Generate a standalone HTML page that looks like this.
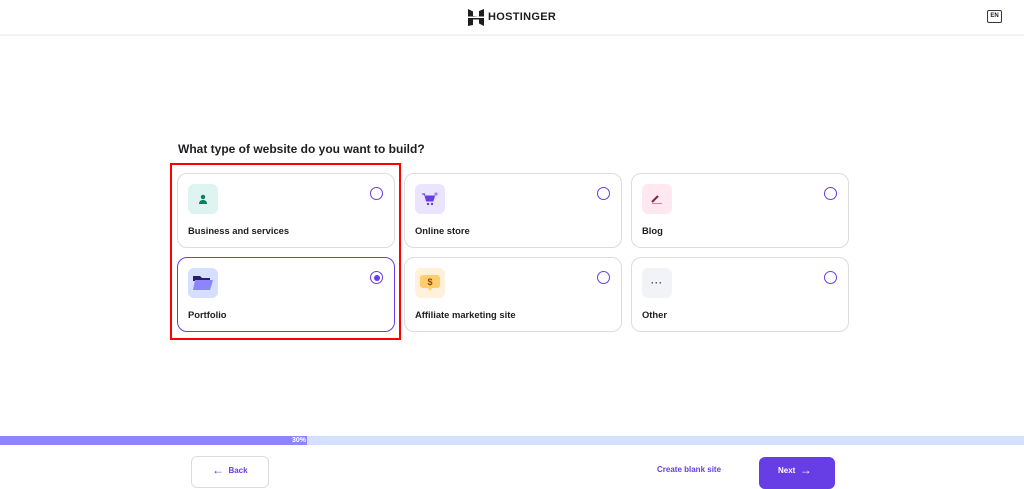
<!DOCTYPE html>
<html><head><style>
*{box-sizing:border-box;margin:0;padding:0}
body{width:1024px;height:484px;background:#fff;font-family:"Liberation Sans",sans-serif;position:relative;overflow:hidden;color:#1d1e20}
.hdr{position:absolute;left:0;top:0;width:1024px;height:36px;border-bottom:2px solid #f2f3f6}
.card{position:absolute;width:218px;height:75px;border:1px solid #dadce0;border-radius:10px;background:#fff}
.card.sel{border:1.5px solid #673de6}
.ic{position:absolute;left:10px;top:10px;width:30px;height:30px;border-radius:6px;display:flex;align-items:center;justify-content:center}
.rad{position:absolute;right:11px;top:13px;width:13px;height:13px;border:1.5px solid #673de6;border-radius:50%}
.lbl{position:absolute;left:10px;top:51px;font-size:9.4px;font-weight:bold;color:#1d1e20}
</style></head><body>
<div class="hdr">
 <svg style="position:absolute;left:468px;top:9px" width="16" height="17" viewBox="0 0 16 17"><path d="M0 0l5 2.5v4.5l6 .5V2l5-2v7.5H0z M0 9h16v8l-5-2.5v-4H5v5.5L0 17z" fill="#1d1e20"/></svg>
 <div style="position:absolute;left:488px;top:11px;font-size:11px;font-weight:bold;letter-spacing:.3px;color:#1d1e20">HOSTINGER</div>
 <div style="position:absolute;left:987px;top:10px;width:15px;height:13px;border:1.5px solid #36344d;border-radius:2px;font-size:6px;font-weight:bold;text-align:center;line-height:10px">EN</div>
</div>
<div style="position:absolute;left:178px;top:142px;font-size:12px;font-weight:bold;color:#1d1e20">What type of website do you want to build?</div>

<div class="card" style="left:177px;top:173px"><div class="ic" style="background:#def4f0"><svg width="10" height="10" viewBox="0 0 10 10"><circle cx="5" cy="3" r="2.2" fill="#008361"/><path d="M1 10c0-3 2-4 4-4s4 1 4 4z" fill="#008361"/></svg></div><div class="rad"></div><div class="lbl">Business and services</div></div>
<div class="card" style="left:404px;top:173px"><div class="ic" style="background:#ebe4ff"><svg width="16" height="14" viewBox="0 0 16 14"><path d="M0 2h2.5l2 7h6.5l1.5-5H4" fill="#673de6" stroke="#673de6" stroke-width="1"/><circle cx="6" cy="12" r="1.2" fill="#673de6"/><circle cx="10" cy="12" r="1.2" fill="#673de6"/><circle cx="14" cy="2" r="1.6" fill="#8c85ff"/></svg></div><div class="rad"></div><div class="lbl">Online store</div></div>
<div class="card" style="left:631px;top:173px"><div class="ic" style="background:#ffe8ef"><svg width="12" height="10" viewBox="0 0 12 10"><path d="M1 8l6-6" stroke="#8a1d4a" stroke-width="2"/><path d="M1 9.5h10" stroke="#d4658e" stroke-width=".8"/></svg></div><div class="rad"></div><div class="lbl">Blog</div></div>

<div class="card sel" style="left:177px;top:257px"><div class="ic" style="background:#d5dfff"><svg width="20" height="14" viewBox="0 0 20 14"><path d="M0 0h7l2 2h8v3H0z" fill="#2f1c6a"/><path d="M2 4h18l-3 10H0z" fill="#8c85ff"/></svg></div><div class="rad" style="display:flex;align-items:center;justify-content:center"><div style="width:6px;height:6px;border-radius:50%;background:#673de6"></div></div><div class="lbl">Portfolio</div></div>
<div class="card" style="left:404px;top:257px"><div class="ic" style="background:#fff1dc"><svg width="22" height="18" viewBox="0 0 22 18"><rect x="1" y="1" width="20" height="13" rx="3" fill="#ffcd6b"/><path d="M9 14l2 3 2-3z" fill="#ffcd6b"/><text x="11" y="11" font-size="9" font-weight="bold" text-anchor="middle" fill="#8a4b00" font-family="Liberation Sans">$</text></svg></div><div class="rad"></div><div class="lbl">Affiliate marketing site</div></div>
<div class="card" style="left:631px;top:257px"><div class="ic" style="background:#f2f3f6;font-size:9px;font-weight:bold;color:#36344d;letter-spacing:1px">···</div><div class="rad"></div><div class="lbl">Other</div></div>

<div style="position:absolute;left:170px;top:163px;width:231px;height:177px;border:2px solid #f00"></div>

<div style="position:absolute;left:0;top:436px;width:1024px;height:9px;background:#d5dfff"></div>
<div style="position:absolute;left:0;top:436px;width:307px;height:9px;background:#8c85ff;color:#fff;font-size:7px;font-weight:bold;text-align:right;padding-right:1px;line-height:9px">30%</div>

<div style="position:absolute;left:191px;top:456px;width:78px;height:32px;border:1px solid #dadce0;border-radius:6px;color:#673de6;font-size:8px;font-weight:bold;line-height:27px;padding-left:20px"><span style="font-size:12px;vertical-align:-1px">←</span>&nbsp;&nbsp;Back</div>
<div style="position:absolute;left:657px;top:465px;font-size:8px;font-weight:bold;color:#673de6">Create blank site</div>
<div style="position:absolute;left:759px;top:457px;width:76px;height:32px;background:#673de6;border-radius:6px;color:#fff;font-size:8px;font-weight:bold;line-height:27px;padding-left:19px">Next&nbsp;&nbsp;<span style="font-size:12px;vertical-align:-1px">→</span></div>
</body></html>
